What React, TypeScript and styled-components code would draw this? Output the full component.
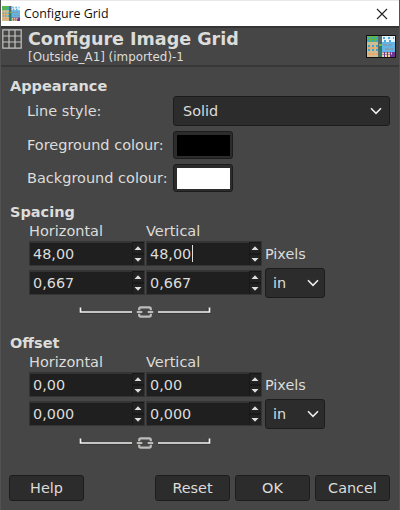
import React from 'react';
import styled, { createGlobalStyle } from 'styled-components';

const GlobalStyle = createGlobalStyle`
  * { box-sizing: border-box; }
  body { margin: 0; background: #464646; }
`;

const Dialog = styled.div`
  width: 400px;
  height: 510px;
  display: flex;
  flex-direction: column;
  background: #464646;
  border-left: 1px solid #525252;
  border-right: 1px solid #525252;
  color: #dcdcda;
  font: 14.4px/18px 'DejaVu Sans', sans-serif;
  white-space: nowrap;
  overflow: hidden;
`;

const TitleBar = styled.div`
  height: 26px;
  flex: none;
  margin: 0 -1px;
  display: flex;
  align-items: center;
  padding: 0 12px 0 2px;
  background: #fff;
  border-top: 1px solid #e8e8e8;
  color: #111;
  font: 12.4px/16px 'Open Sans', sans-serif;
`;

const WindowTitle = styled.span`
  flex: 1;
  margin-left: 4px;
`;

const Header = styled.div`
  height: 41px;
  flex: none;
  display: flex;
  padding: 0 3px 0 1px;
  border-top: 2px solid #343434;
  border-bottom: 2px solid #373737;
`;

const HeaderTexts = styled.div`
  flex: 1;
  padding: 1px 0 0 6px;
`;

const Heading = styled.div`
  font-size: 17.55px;
  line-height: 21px;
  font-weight: bold;
`;

const Subtitle = styled.div`
  font-size: 11.9px;
  line-height: 14px;
`;

const GridIcon = styled.svg`
  margin-top: 1px;
`;

const Thumb = styled.svg`
  margin-top: 7px;
`;

const Body = styled.div`
  flex: 1;
  display: flex;
  flex-direction: column;
  padding: 10px 9px 9px 8px;
`;

const Section = styled.section<{ $height: number }>`
  height: ${(p) => p.$height}px;
`;

const SectionTitle = styled.div`
  font-size: 14.5px;
  font-weight: bold;
  height: 19px;
  line-height: 18px;
  padding-left: 1px;
`;

const FormRow = styled.div<{ $height: number; $gap: number }>`
  display: flex;
  align-items: center;
  height: ${(p) => p.$height}px;
  margin-bottom: ${(p) => p.$gap}px;
  padding-left: 18px;
`;

const RowLabel = styled.label`
  width: 146px;
  flex: none;
  font-size: 14.5px;
`;

const Combo = styled.div<{ $width: number; $pad: number }>`
  width: ${(p) => p.$width}px;
  height: 30px;
  display: flex;
  align-items: center;
  justify-content: space-between;
  padding: 0 ${(p) => p.$pad - 2}px 0 ${(p) => p.$pad}px;
  background: #2c2c2c;
  border: 1px solid #1c1c1c;
  border-radius: 3px;
`;

const ColorButton = styled.div<{ $color: string }>`
  width: 60px;
  height: 28px;
  border: 1px solid #1c1c1c;
  border-radius: 3px;
  padding: 3px 2px 2px 3px;
  background: ${(p) => p.$color} content-box, #2c2c2c;
`;

const Fields = styled.div`
  display: grid;
  grid-template-columns: 117px 119px 60px;
  grid-template-rows: 19px 29px 29px;
  padding-left: 20px;
`;

const ColumnLabel = styled.span`
  font-size: 14.5px;
  line-height: 18px;
`;

const UnitLabel = styled.span`
  grid-column: 3;
  line-height: 27px;
`;

const UnitSlot = styled.div`
  margin-top: -2px;
`;

const SpinBox = styled.div`
  width: 116px;
  height: 25px;
  display: flex;
  background: #1f1f1f;
  border: 1px solid #343434;
  border-top-width: 2px;
`;

const SpinValue = styled.span`
  flex: 1;
  display: flex;
  align-items: center;
  padding: 0 0 1px 3px;
`;

const Caret = styled.i`
  width: 1px;
  height: 17px;
  margin-left: 1px;
  background: #ddd;
`;

const SpinArrows = styled.svg`
  margin-top: -1px;
`;

const LinkRow = styled.div`
  display: flex;
  padding: 3px 0 0 70px;
`;

const Actions = styled.div`
  display: flex;
  gap: 5px;
  margin-top: auto;
`;

const Button = styled.button<{ $start?: boolean }>`
  width: 75px;
  height: 26px;
  padding: 0 0 1px;
  margin-right: ${(p) => (p.$start ? 'auto' : '0')};
  font: inherit;
  color: inherit;
  background: #2c2c2c;
  border: 1px solid #1c1c1c;
  border-radius: 3px;
`;

const Chevron = () => (
  <svg width="12" height="8" viewBox="0 0 12 8">
    <path d="M1 1.3 6 6.3 11 1.3" fill="none" stroke="#eee" strokeWidth="1.6" />
  </svg>
);

const TilesetArt = () => (
  <>
    <rect width="28" height="21" fill="#b9c8a6" />
    <rect width="12" height="6" fill="#60b73d" />
    <rect y="6" width="12" height="15" fill="#d1bb91" />
    <rect x="11" width="4" height="21" fill="#57686a" />
    <rect x="12" y="10" width="3" height="11" fill="#267d70" />
    <rect x="12" y="8" width="3" height="2" fill="#82b926" />
    <rect x="15" width="13" height="6" fill="#e9f4fa" />
    <rect x="15" y="6" width="13" height="10" fill="#62b5e5" />
    <rect x="15" y="16" width="13" height="5" fill="#6f3591" />
    <path d="M1 2H11M1 5H11M1 10H11M1 14H11" stroke="#36a6d4" strokeWidth="2" strokeDasharray="2 2" />
    <path d="M1 12H11M1 18H11" stroke="#efa35c" strokeWidth="1.5" strokeDasharray="3 1" />
    <path d="M16 2H27M17 5H27" stroke="#49a9dc" strokeWidth="2" strokeDasharray="2 3" />
    <path d="M16 9H26M18 13H27" stroke="#8299aa" strokeWidth="1.6" strokeDasharray="4 1" />
    <path d="M15 17.5H25M15 20H24" stroke="#ead5a0" strokeWidth="2" strokeDasharray="2 1" />
  </>
);

const Spin = ({ value, focused }: { value: string; focused?: boolean }) => (
  <SpinBox>
    <SpinValue>
      {value}
      {focused && <Caret />}
    </SpinValue>
    <SpinArrows width="12" height="23" viewBox="0 0 12 23">
      <rect width="12" height="23" fill="#181818" />
      <rect x="1" y="1" width="11" height="10" fill="#222" />
      <rect x="1" y="13" width="11" height="10" fill="#222" />
      <path d="M2.5 8 6 4.2 9.5 8ZM2.5 16 6 19.8 9.5 16Z" fill="#ddd" />
    </SpinArrows>
  </SpinBox>
);

const ChainLink = () => (
  <LinkRow>
    <svg width="132" height="16" viewBox="0 0 132 16">
      <path d="M2 6V10.5H53M79 10.5H130V6" fill="none" stroke="#383838" strokeWidth="3.2" />
      <path d="M1.5 5.5V10H53M79 10H130.5V5.5" fill="none" stroke="#f4f4f2" strokeWidth="1.7" />
      <path
        d="M60.2 8.2V7Q60.2 5.4 61.8 5.4H70.2Q71.8 5.4 71.8 7V8.2M60.2 11.8V13Q60.2 14.6 61.8 14.6H70.2Q71.8 14.6 71.8 13V11.8"
        fill="none"
        stroke="#bcbcba"
        strokeWidth="2.2"
      />
      <path d="M57.8 10H63.3M68.7 10H74.2" stroke="#bcbcba" strokeWidth="2" />
    </svg>
  </LinkRow>
);

const SizeFields = ({ first, second, focused }: { first: string; second: string; focused?: boolean }) => (
  <>
    <Fields>
      <ColumnLabel>Horizontal</ColumnLabel>
      <ColumnLabel>Vertical</ColumnLabel>
      <span />
      <Spin value={first} />
      <Spin value={first} focused={focused} />
      <UnitLabel>Pixels</UnitLabel>
      <Spin value={second} />
      <Spin value={second} />
      <UnitSlot>
        <Combo $width={60} $pad={7}>
          in
          <Chevron />
        </Combo>
      </UnitSlot>
    </Fields>
    <ChainLink />
  </>
);

export default function App() {
  return (
    <>
      <GlobalStyle />
      <Dialog>
        <TitleBar>
          <svg width="18" height="15" viewBox="0 0 28 21" preserveAspectRatio="none">
            <TilesetArt />
          </svg>
          <WindowTitle>Configure Grid</WindowTitle>
          <svg width="12" height="12" viewBox="0 0 12 12">
            <path d="M1 1 11 11M11 1 1 11" stroke="#222" strokeWidth="1.1" />
          </svg>
        </TitleBar>
        <Header>
          <GridIcon width="20" height="20" viewBox="0 0 20 20">
            <path d="M.8 .8H19.2V19.2H.8ZM7 1V19M13 1V19M1 7H19M1 13H19" fill="none" stroke="#c4c4c2" strokeWidth="1.2" />
          </GridIcon>
          <HeaderTexts>
            <Heading>Configure Image Grid</Heading>
            <Subtitle>[Outside_A1] (imported)-1</Subtitle>
          </HeaderTexts>
          <Thumb width="30" height="23" viewBox="-1 -1 30 23">
            <rect x="-1" y="-1" width="30" height="23" fill="#111" />
            <TilesetArt />
          </Thumb>
        </Header>
        <Body>
          <Section $height={126}>
            <SectionTitle>Appearance</SectionTitle>
            <FormRow $height={30} $gap={5}>
              <RowLabel>Line style:</RowLabel>
              <Combo $width={217} $pad={9}>
                Solid
                <Chevron />
              </Combo>
            </FormRow>
            <FormRow $height={28} $gap={5}>
              <RowLabel>Foreground colour:</RowLabel>
              <ColorButton $color="linear-gradient(#000, #000)" />
            </FormRow>
            <FormRow $height={28} $gap={0}>
              <RowLabel>Background colour:</RowLabel>
              <ColorButton $color="linear-gradient(#fff, #fff)" />
            </FormRow>
          </Section>
          <Section $height={131}>
            <SectionTitle>Spacing</SectionTitle>
            <SizeFields first="48,00" second="0,667" focused />
          </Section>
          <Section $height={121}>
            <SectionTitle>Offset</SectionTitle>
            <SizeFields first="0,00" second="0,000" />
          </Section>
          <Actions>
            <Button $start>Help</Button>
            <Button>Reset</Button>
            <Button>OK</Button>
            <Button>Cancel</Button>
          </Actions>
        </Body>
      </Dialog>
    </>
  );
}
